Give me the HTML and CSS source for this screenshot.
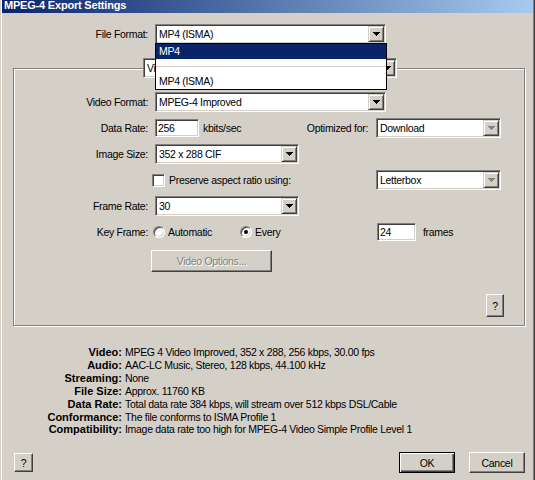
FILE: index.html
```html
<!DOCTYPE html>
<html lang="en">
<head>
    <meta charset="UTF-8">
    <title>MPEG-4 Export Settings</title>
    <link rel="stylesheet" href="styles.css">
</head>
<body>

    <div class="window">

        <div class="titlebar">MPEG-4 Export Settings</div>

        <!-- file format -->
        <div class="format-row">
            <span class="label">File Format:</span>
            <div class="combo combo-format">
                <span class="combo-text">MP4 (ISMA)</span>
                <span class="drop-btn">
                    <svg class="arrow" width="7" height="4" viewBox="0 0 7 4"><path d="M0 0h7v1h-1v1h-1v1h-1v1h-1v-1h-1v-1h-1v-1h-1z"/></svg>
                </span>
                <ul class="droplist">
                    <li class="selected">MP4</li>
                    <li class="sep"></li>
                    <li>MP4 (ISMA)</li>
                </ul>
            </div>
        </div>

        <!-- video / audio panel -->
        <fieldset class="panel">
            <legend class="combo combo-tab">
                <span class="combo-text">Video</span>
                <span class="drop-btn">
                    <svg class="arrow" width="7" height="4" viewBox="0 0 7 4"><path d="M0 0h7v1h-1v1h-1v1h-1v1h-1v-1h-1v-1h-1v-1h-1z"/></svg>
                </span>
            </legend>

            <div class="row">
                <span class="label">Video Format:</span>
                <div class="combo combo-wide">
                    <span class="combo-text">MPEG-4 Improved</span>
                    <span class="drop-btn">
                        <svg class="arrow" width="7" height="4" viewBox="0 0 7 4"><path d="M0 0h7v1h-1v1h-1v1h-1v1h-1v-1h-1v-1h-1v-1h-1z"/></svg>
                    </span>
                </div>
            </div>

            <div class="row">
                <span class="label">Data Rate:</span>
                <span class="field field-rate">256</span>
                <span class="unit">kbits/sec</span>
                <div class="right">
                    <span class="right-label">Optimized for:</span>
                    <div class="combo combo-side disabled">
                        <span class="combo-text">Download</span>
                        <span class="drop-btn">
                            <svg class="arrow" width="7" height="4" viewBox="0 0 7 4"><path d="M0 0h7v1h-1v1h-1v1h-1v1h-1v-1h-1v-1h-1v-1h-1z"/></svg>
                        </span>
                    </div>
                </div>
            </div>

            <div class="row">
                <span class="label">Image Size:</span>
                <div class="combo combo-short">
                    <span class="combo-text">352 x 288 CIF</span>
                    <span class="drop-btn">
                        <svg class="arrow" width="7" height="4" viewBox="0 0 7 4"><path d="M0 0h7v1h-1v1h-1v1h-1v1h-1v-1h-1v-1h-1v-1h-1z"/></svg>
                    </span>
                </div>
            </div>

            <div class="row">
                <span class="label"></span>
                <span class="checkbox"></span>
                <span class="check-text">Preserve aspect ratio using:</span>
                <div class="right">
                    <div class="combo combo-side disabled">
                        <span class="combo-text">Letterbox</span>
                        <span class="drop-btn">
                            <svg class="arrow" width="7" height="4" viewBox="0 0 7 4"><path d="M0 0h7v1h-1v1h-1v1h-1v1h-1v-1h-1v-1h-1v-1h-1z"/></svg>
                        </span>
                    </div>
                </div>
            </div>

            <div class="row">
                <span class="label">Frame Rate:</span>
                <div class="combo combo-short">
                    <span class="combo-text">30</span>
                    <span class="drop-btn">
                        <svg class="arrow" width="7" height="4" viewBox="0 0 7 4"><path d="M0 0h7v1h-1v1h-1v1h-1v1h-1v-1h-1v-1h-1v-1h-1z"/></svg>
                    </span>
                </div>
            </div>

            <div class="row">
                <span class="label">Key Frame:</span>
                <span class="radio-item radio-auto"><span class="radio"></span>Automatic</span>
                <span class="radio-item radio-every"><span class="radio checked"></span>Every</span>
                <span class="field field-frames">24</span>
                <span class="unit-frames">frames</span>
            </div>

            <div class="options-row">
                <span class="btn btn-options">Video Options...</span>
            </div>

            <div class="help-row">
                <span class="btn btn-help">?</span>
            </div>
        </fieldset>

        <!-- summary -->
        <dl class="summary">
            <dt>Video:</dt><dd>MPEG 4 Video Improved, 352 x 288, 256 kbps, 30.00 fps</dd>
            <dt>Audio:</dt><dd>AAC-LC Music, Stereo, 128 kbps, 44.100 kHz</dd>
            <dt>Streaming:</dt><dd>None</dd>
            <dt>File Size:</dt><dd>Approx. 11760 KB</dd>
            <dt>Data Rate:</dt><dd>Total data rate 384 kbps, will stream over 512 kbps DSL/Cable</dd>
            <dt>Conformance:</dt><dd>The file conforms to ISMA Profile 1</dd>
            <dt>Compatibility:</dt><dd>Image data rate too high for MPEG-4 Video Simple Profile Level 1</dd>
        </dl>

        <div class="footer">
            <span class="btn btn-small">?</span>
            <div class="footer-right">
                <span class="btn btn-default">OK</span>
                <span class="btn btn-cancel">Cancel</span>
            </div>
        </div>

    </div>

</body>
</html>
```

FILE: styles.css
```css
* {
    margin: 0px;
    padding: 0px;
    box-sizing: border-box;
}

body {
    background-color: #d4d0c8;
    font-family: "Liberation Sans", Arial, sans-serif;
    font-size: 10.5px;
    letter-spacing: -0.3px;
    color: #000;
}

ul {
    list-style: none;
}

.window {
    width: 535px;
    height: 480px;
    overflow: hidden;
    border-left: 1px solid #d4d0c8;
    border-right: 1px solid #404040;
    box-shadow: inset 1px 0 #fff, inset -1px 0 #808080;
}

.titlebar {
    height: 13px;
    margin: 0 1px;
    padding-left: 2px;
    line-height: 11px;
    color: #fff;
    font-size: 11px;
    font-weight: bold;
    letter-spacing: -0.2px;
    background: linear-gradient(to right, #0a246a, #a6caf0);
}

/* combo boxes */

.combo {
    position: relative;
    display: flex;
    align-items: center;
    height: 20px;
    padding: 1px;
    background-color: #fff;
    border: 1px solid;
    border-color: #808080 #fff #fff #808080;
    box-shadow: inset 1px 1px #404040, inset -1px -1px #d4d0c8;
}

.combo-text {
    flex: 1;
    padding-left: 2px;
    white-space: nowrap;
    overflow: hidden;
}

.drop-btn {
    display: flex;
    align-items: center;
    justify-content: center;
    width: 16px;
    height: 16px;
    background-color: #d4d0c8;
    border: 1px solid;
    border-color: #d4d0c8 #404040 #404040 #d4d0c8;
    box-shadow: inset 1px 1px #fff, inset -1px -1px #808080;
}

.arrow {
    display: block;
    fill: #000;
}

.disabled .arrow {
    fill: #808080;
}

.combo-format {
    width: 231px;
}

.combo-wide {
    width: 231px;
}

.combo-short {
    width: 144px;
}

.combo-side {
    width: 125px;
}

.droplist {
    position: absolute;
    top: 18px;
    left: -1px;
    width: 232px;
    background-color: #fff;
    border: 1px solid #000;
    z-index: 2;
}

.droplist li {
    height: 15px;
    line-height: 15px;
    padding-left: 3px;
}

.droplist .selected {
    background-color: #0a246a;
    color: #fff;
}

.droplist .sep {
    position: relative;
}

.droplist .sep::after {
    content: "";
    position: absolute;
    left: 0;
    right: 0;
    top: 7px;
    height: 1px;
    background-color: #d4d0c8;
}

/* file format row */

.format-row {
    display: flex;
    align-items: center;
    margin-top: 11px;
}

.format-row .label {
    width: 147px;
    margin-right: 7px;
    text-align: right;
}

/* panel */

.panel {
    width: 512px;
    margin: 14px 0 0 12px;
    padding: 0 0 8px 0;
    border: 1px solid #808080;
    box-shadow: inset 1px 1px #fff, 1px 1px #fff;
}

.combo-tab {
    width: 254px;
    margin-left: 129px;
}

.row {
    display: flex;
    align-items: center;
    height: 26px;
}

.panel .row:first-of-type {
    margin-top: 11px;
}

.row .label {
    width: 134px;
    margin-right: 7px;
    text-align: right;
}

.right {
    display: flex;
    align-items: center;
    margin-left: auto;
    margin-right: 23px;
}

.right-label {
    margin-right: 8px;
}

.field {
    display: flex;
    align-items: center;
    height: 18px;
    padding-left: 2px;
    background-color: #fff;
    border: 1px solid;
    border-color: #808080 #fff #fff #808080;
    box-shadow: inset 1px 1px #404040, inset -1px -1px #d4d0c8;
}

.field-rate {
    width: 44px;
}

.unit {
    margin-left: 4px;
}

.checkbox {
    width: 13px;
    height: 13px;
    margin-left: -3px;
    background-color: #fff;
    border: 1px solid;
    border-color: #808080 #fff #fff #808080;
    box-shadow: inset 1px 1px #404040, inset -1px -1px #d4d0c8;
}

.check-text {
    margin-left: 4px;
}

.radio-item {
    display: flex;
    align-items: center;
}

.radio-auto {
    width: 87px;
    margin-left: -2px;
}

.radio-every {
    width: 137px;
}

.radio {
    position: relative;
    width: 12px;
    height: 12px;
    margin-right: 3px;
    border-radius: 50%;
    background-color: #fff;
    border: 1px solid;
    border-color: #808080 #fff #fff #808080;
    box-shadow: inset 1px 1px #404040, inset -1px -1px #d4d0c8;
}

.radio.checked::after {
    content: "";
    position: absolute;
    left: 3px;
    top: 3px;
    width: 4px;
    height: 4px;
    border-radius: 50%;
    background-color: #000;
}

.field-frames {
    width: 39px;
}

.unit-frames {
    margin-left: 7px;
}

/* buttons */

.btn {
    display: flex;
    align-items: center;
    justify-content: center;
    background-color: #d4d0c8;
    border: 1px solid;
    border-color: #fff #404040 #404040 #fff;
    box-shadow: inset -1px -1px #808080;
}

.options-row {
    margin-top: 5px;
    padding-left: 137px;
}

.btn-options {
    width: 121px;
    height: 22px;
    color: #808080;
    text-shadow: 1px 1px #fff;
}

.help-row {
    display: flex;
    justify-content: flex-end;
    margin-top: 22px;
    padding-right: 20px;
}

.btn-help {
    width: 18px;
    height: 23px;
}

/* summary */

.summary {
    display: grid;
    grid-template-columns: 121px 1fr;
    column-gap: 3px;
    margin-top: 20px;
    line-height: 12.9px;
}

.summary dt {
    font-size: 11px;
    font-weight: bold;
    letter-spacing: 0;
    text-align: right;
}

.summary dd {
    white-space: nowrap;
}

/* footer */

.footer {
    display: flex;
    align-items: center;
    justify-content: space-between;
    margin-top: 16px;
    padding: 0 9px 0 13px;
}

.footer-right {
    display: flex;
    gap: 14px;
}

.btn-small {
    width: 19px;
    height: 19px;
}

.btn-default {
    width: 56px;
    height: 21px;
    border: 1px solid #000;
    box-shadow: inset 1px 1px #fff, inset -1px -1px #404040, inset -2px -2px #808080;
}

.btn-cancel {
    width: 56px;
    height: 21px;
}
```
